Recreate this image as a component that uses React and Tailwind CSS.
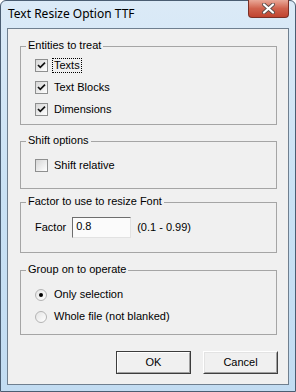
import React from "react"

const font = { fontFamily: '"Liberation Sans", Arial, sans-serif' }

// classic check box, 13x13
const CheckBox = ({ checked }) => (
  <div className="flex h-[13px] w-[13px] shrink-0 items-center justify-center border border-[#8e8f8f] bg-gradient-to-br from-[#d6d6d6] to-white">
    {checked && (
      <svg width="11" height="11" viewBox="0 0 11 11">
        <path d="M2 5 L4.3 7.3 L9 2.6" fill="none" stroke="#111" strokeWidth="1.7" />
      </svg>
    )}
  </div>
)

const Radio = ({ checked }) => (
  <div className="flex h-[12px] w-[12px] shrink-0 items-center justify-center rounded-full border border-[#b4b4b4] bg-gradient-to-br from-[#e4e4e4] to-white">
    {checked && <div className="h-[4px] w-[4px] rounded-full bg-black" />}
  </div>
)

// group box with a caption sitting on the top line
const Group = ({ title, className, children }) => (
  <div className={`relative ml-[12px] w-[257px] border border-[#a5a5a5] ${className}`}>
    <span className="absolute -top-[8px] left-[5px] bg-[#f0f0f0] px-[2px] text-[11px] leading-[13px] text-black">
      {title}
    </span>
    {children}
  </div>
)

const Row = ({ children, className = "" }) => (
  <div className={`flex items-center pl-[14px] text-[11px] leading-[13px] text-black ${className}`}>{children}</div>
)

const Button = ({ label, isDefault }) =>
  isDefault ? (
    <div className="h-[23px] w-[75px] border border-[#3c3c3c] bg-[#f0f0f0]">
      <div className="flex h-full w-full items-center justify-center border-t border-l border-b border-r border-t-white border-l-white border-b-[#a0a0a0] border-r-[#a0a0a0] text-[11px] text-black">
        {label}
      </div>
    </div>
  ) : (
    <div className="h-[23px] w-[75px] border border-t-white border-l-white border-b-[#404040] border-r-[#404040] bg-[#f0f0f0]">
      <div className="flex h-full w-full items-center justify-center border border-t-[#e3e3e3] border-l-[#e3e3e3] border-b-[#a0a0a0] border-r-[#a0a0a0] text-[11px] text-black">
        {label}
      </div>
    </div>
  )

export default function App() {
  return (
    <div style={font} className="h-[392px] w-[296px] bg-white">
      <div className="flex h-[392px] w-[296px] flex-col rounded-t-[6px] border border-[#4a5d72] bg-gradient-to-b from-[#dbeaf7] via-[#c9e1f4] to-[#c2dcf2] px-[6px] pb-[6px]">
        {/* Title bar */}
        <div className="flex h-[27px] shrink-0">
          <div
            className="pl-[1px] pt-[5px] text-[12px] leading-[16px] text-black"
            style={{ fontFamily: '"Noto Sans", "Liberation Sans", sans-serif' }}
          >
            Text Resize Option TTF
          </div>
          <div className="-mt-[1px] ml-auto flex h-[18px] w-[41px] items-center justify-center rounded-b-[4px] border border-t-0 border-[#7b2f25] bg-gradient-to-b from-[#e9a898] via-[#d0624d] to-[#c0432f]">
            <svg width="13" height="11" viewBox="0 0 13 11">
              <path d="M2 1.5 L11 9.5 M11 1.5 L2 9.5" stroke="#5a4a48" strokeWidth="3.8" strokeLinecap="round" />
              <path d="M2 1.5 L11 9.5 M11 1.5 L2 9.5" stroke="#ffffff" strokeWidth="2.2" strokeLinecap="round" />
            </svg>
          </div>
        </div>

        {/* Client area */}
        <div className="flex flex-1 flex-col border border-[#6f7f8f] bg-[#f0f0f0]">
          <Group title="Entities to treat" className="mt-[17px] h-[79px] pt-[11px]">
            <Row>
              <CheckBox checked />
              <span className="ml-[4px] border border-dotted border-black px-[1px]">Texts</span>
            </Row>
            <Row className="mt-[8px]">
              <CheckBox checked />
              <span className="ml-[6px]">Text Blocks</span>
            </Row>
            <Row className="mt-[9px]">
              <CheckBox checked />
              <span className="ml-[6px]">Dimensions</span>
            </Row>
          </Group>

          <Group title="Shift options" className="mt-[16px] h-[48px] pt-[17px]">
            <Row>
              <CheckBox />
              <span className="ml-[6px]">Shift relative</span>
            </Row>
          </Group>

          <Group title="Factor to use to resize Font" className="mt-[13px] h-[51px] pt-[14px]">
            <Row>
              <span>Factor</span>
              <div className="ml-[6px] h-[21px] w-[59px] border border-t-[#6e6e6e] border-l-[#6e6e6e] border-b-[#e2e2e2] border-r-[#e2e2e2] bg-[#fbfbfb] pl-[3px] pt-[2px]">
                0.8
              </div>
              <span className="ml-[6px]">(0.1 - 0.99)</span>
            </Row>
          </Group>

          <Group title="Group on to operate" className="mt-[17px] h-[65px] pt-[17px]">
            <Row>
              <Radio checked />
              <span className="ml-[7px]">Only selection</span>
            </Row>
            <Row className="mt-[9px]">
              <Radio />
              <span className="ml-[7px]">Whole file (not blanked)</span>
            </Row>
          </Group>

          <div className="mt-[16px] flex justify-end gap-[12px] pr-[10px]">
            <Button label="OK" isDefault />
            <Button label="Cancel" />
          </div>
        </div>
      </div>
    </div>
  )
}
